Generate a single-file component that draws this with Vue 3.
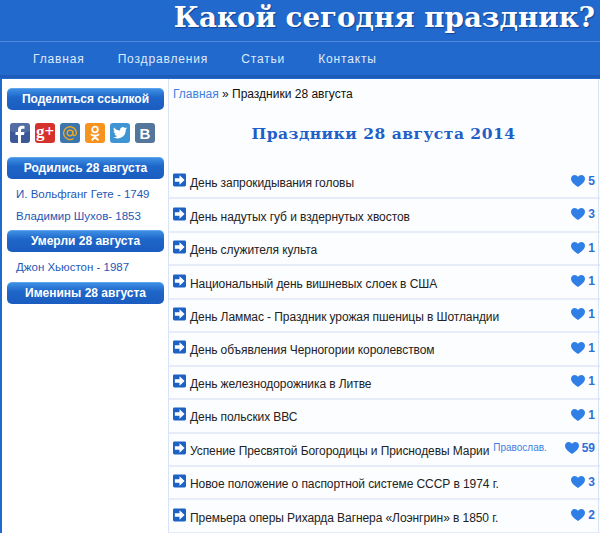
<template>
  <div class="page">
    <header class="top">
      <h1>Какой сегодня праздник?</h1>
    </header>
    <nav class="menu">
      <a v-for="item in menu" :key="item">{{ item }}</a>
    </nav>
    <div class="content">
      <aside class="side">
        <div class="side-title">Поделиться ссылкой</div>
        <div class="socials">
          <svg viewBox="0 0 20 20" class="soc"><rect width="20" height="20" rx="3" fill="#3b5998"/><rect width="20" height="9" rx="3" fill="#fff" opacity=".12"/><path d="M11 20v-8h3l.5-3H11V7.300c0-1 .4-1.600 1.600-1.600h1.900V3c-.6-.1-1.500-.2-2.500-.2C9.500 2.800 8 4.300 8 6.900V9H5.500v3H8v8z" fill="#fff"/></svg>
          <svg viewBox="0 0 20 20" class="soc"><rect width="20" height="20" rx="3" fill="#d6322c"/><text x="1" y="14" class="soc-text g">g+</text></svg>
          <svg viewBox="0 0 20 20" class="soc"><rect width="20" height="20" rx="3" fill="#3d76ad"/><circle cx="10" cy="10" r="2.800" fill="none" stroke="#f3a91f" stroke-width="1.300"/><path d="M12.800 7.500v3.500c0 2.400 3.600 2 3.600-1A6.400 6.400 0 1 0 13.500 15.500" fill="none" stroke="#f3a91f" stroke-width="1.300"/></svg>
          <svg viewBox="0 0 20 20" class="soc"><rect width="20" height="20" rx="3" fill="#f7931e"/><circle cx="10" cy="6.500" r="2.800" fill="none" stroke="#fff" stroke-width="1.800"/><path d="M5.800 11.300c2.500 1.700 5.900 1.700 8.400 0M10 13v1M6.500 17.300 10 14l3.500 3.300" fill="none" stroke="#fff" stroke-width="1.800"/></svg>
          <svg viewBox="0 0 20 20" class="soc"><rect width="20" height="20" rx="3" fill="#3f95d3"/><path d="M17 5.300c-.5.200-1 .4-1.600.4.600-.3 1-.8 1.200-1.500-.5.300-1.100.5-1.700.7a2.900 2.900 0 0 0-4.900 2.600C7.600 7.400 5.500 6.300 4 4.500c-.8 1.300-.4 3 .9 3.800-.5 0-.9-.1-1.300-.3 0 1.400 1 2.600 2.300 2.900-.4.100-.9.100-1.300 0 .4 1.200 1.400 2 2.700 2-1.200 1-2.800 1.400-4.300 1.200 4.700 3 12.900 1 12.800-7.500.5-.4 1-.8 1.300-1.300z" fill="#fff"/></svg>
          <svg viewBox="0 0 20 20" class="soc"><rect width="20" height="20" rx="3" fill="#54769a"/><text x="10" y="15.500" text-anchor="middle" class="soc-text b">В</text></svg>
        </div>
        <div class="side-title">Родились 28 августа</div>
        <ul class="people">
          <li>И. Вольфганг Гете - 1749</li>
          <li>Владимир Шухов- 1853</li>
        </ul>
        <div class="side-title">Умерли 28 августа</div>
        <ul class="people">
          <li>Джон Хьюстон - 1987</li>
        </ul>
        <div class="side-title">Именины 28 августа</div>
      </aside>
      <main class="main">
        <div class="crumbs"><a>Главная</a> » Праздники 28 августа</div>
        <h2>Праздники 28 августа 2014</h2>
        <ul class="list">
          <li v-for="row in rows" :key="row.name" class="row">
            <svg viewBox="0 0 14 14" class="arrow">
              <rect width="14" height="14" rx="1.500" fill="#1c62c4"/>
              <path d="M2 5h5V2l5.500 5L7 12V9H2z" fill="#fff"/>
            </svg>
            <span class="name">{{ row.name }}</span>
            <span v-if="row.tag" class="tag">{{ row.tag }}</span>
            <span class="likes">
              <svg viewBox="0 0 14 12" class="heart"><path d="M7 12C3 9 0 6.800 0 3.700 0 1.500 1.700 0 3.700 0 5 0 6.300.7 7 1.900 7.700.7 9 0 10.300 0 12.300 0 14 1.500 14 3.700 14 6.800 11 9 7 12z" fill="#2f7fe6"/></svg>
              {{ row.count }}
            </span>
          </li>
        </ul>
      </main>
    </div>
  </div>
</template>

<script setup>
const menu = ["Главная", "Поздравления", "Статьи", "Контакты"];

const rows = [
  { name: "День запрокидывания головы", count: 5 },
  { name: "День надутых губ и вздернутых хвостов", count: 3 },
  { name: "День служителя культа", count: 1 },
  { name: "Национальный день вишневых слоек в США", count: 1 },
  { name: "День Ламмас - Праздник урожая пшеницы в Шотландии", count: 1 },
  { name: "День объявления Черногории королевством", count: 1 },
  { name: "День железнодорожника в Литве", count: 1 },
  { name: "День польских ВВС", count: 1 },
  { name: "Успение Пресвятой Богородицы и Приснодевы Марии", tag: "Православ.", count: 59 },
  { name: "Новое положение о паспортной системе СССР в 1974 г.", count: 3 },
  { name: "Премьера оперы Рихарда Вагнера «Лоэнгрин» в 1850 г.", count: 2 },
];
</script>

<style>
html,
body {
  margin: 0;
  overflow: hidden;
}
</style>

<style scoped>
.page {
  width: 600px;
  height: 533px;
  overflow: hidden;
  background: #2269cd;
  font-family: "Liberation Sans", Arial, sans-serif;
}
.top {
  height: 41px;
  display: flex;
  justify-content: flex-end;
  padding-right: 5px;
}
h1 {
  margin: 0;
  font-family: "DejaVu Serif", serif;
  font-size: 27.700px;
  line-height: 35px;
  color: #fff;
  white-space: nowrap;
  text-shadow: 1px 1px 1px rgba(0, 20, 80, 0.45);
}
.menu {
  height: 33px;
  border-top: 1px solid #4f88da;
  border-bottom: 3px solid #1c5cb8;
  display: flex;
  align-items: center;
  gap: 33px;
  padding-left: 33px;
  color: #dfeafa;
  font-size: 12px;
  letter-spacing: 0.85px;
}
.content {
  margin: 1px 0 0 2px;
  height: 454px;
  display: flex;
  background: #fff;
}
.side {
  width: 167px;
  border-right: 1px solid #d8e4f5;
  padding: 9px 4px 0 5px;
  box-sizing: border-box;
  flex-shrink: 0;
}
.side-title {
  height: 22px;
  line-height: 20px;
  box-sizing: border-box;
  border-radius: 5px;
  background: linear-gradient(#3d8fe4, #1e66c9 40%, #1b5cc0);
  border-top: 1px solid #5ea4ec;
  color: #fff;
  font-size: 12px;
  font-weight: bold;
  text-align: center;
}
.socials {
  display: flex;
  gap: 5px;
  padding: 13px 3px 14px;
}
.soc {
  width: 20px;
  height: 20px;
  display: block;
}
.soc-text {
  fill: #fff;
  font-weight: bold;
}
.g {
  font-family: "Liberation Serif", serif;
  font-size: 17px;
}
.b {
  font-family: "Liberation Sans", sans-serif;
  font-size: 15px;
}
.people {
  list-style: none;
  margin: 0;
  padding: 4px 0 3px 9px;
  color: #1c58b8;
  font-size: 11.5px;
}
.people:last-of-type {
  padding-bottom: 4px;
}
.people li {
  height: 22px;
  line-height: 22px;
}
.main {
  flex: 1;
  min-width: 0;
  padding-left: 4px;
  padding-right: 1px;
  background: #fcfdff;
  position: relative;
}
.main::after {
  content: "";
  position: absolute;
  top: 0;
  bottom: 0;
  right: 1px;
  width: 1px;
  background: #d8e4f5;
}
.crumbs {
  font-size: 12px;
  line-height: 14px;
  padding-top: 8px;
  color: #111;
}
.crumbs a {
  color: #3f7fe0;
}
h2 {
  margin: 22px 0 0;
  height: 43px;
  line-height: 22px;
  padding-right: 5px;
  text-align: center;
  font-family: "DejaVu Serif", serif;
  font-size: 15.500px;
  letter-spacing: 0.500px;
  color: #1f5fc8;
}
.list {
  list-style: none;
  margin: 0 -1px 0 -4px;
  padding: 0;
}
.row {
  height: 33.44px;
  box-sizing: border-box;
  border-bottom: 2px solid #e6edf8;
  display: flex;
  align-items: center;
  padding: 3px 5px 0 4px;
  font-size: 12px;
  color: #222;
}
.arrow {
  width: 13px;
  height: 14px;
  margin-right: 4px;
  margin-top: -6px;
  flex-shrink: 0;
}
.name {
  white-space: nowrap;
  letter-spacing: -0.08px;
}
.tag {
  font-size: 10px;
  color: #3f7fe0;
  margin-left: 4px;
  margin-top: -6px;
  white-space: nowrap;
}
.likes {
  margin-left: auto;
  display: flex;
  align-items: center;
  gap: 3px;
  font-weight: bold;
  color: #2f6fd8;
  margin-top: -5px;
}
.heart {
  width: 14px;
  height: 12px;
}
</style>
